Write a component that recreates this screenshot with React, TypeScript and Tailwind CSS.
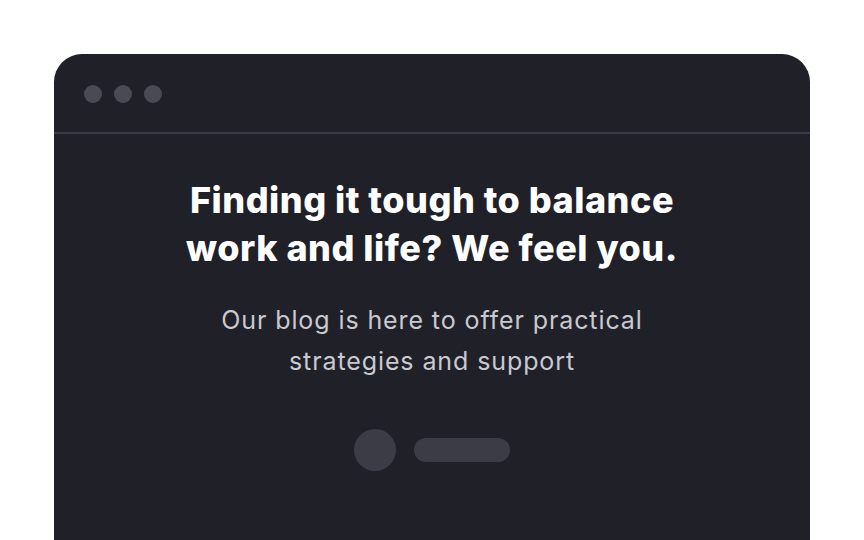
import React from "react";

export default function App() {
  return (
    <div className="w-[864px] h-[540px] bg-white overflow-hidden pt-[54px] px-[54px]" style={{ fontFamily: "Inter, 'Noto Sans', sans-serif" }}>
      <div className="w-[756px] h-[520px] bg-[#202029] rounded-t-[28px] flex flex-col">
        <div className="flex items-center gap-[12px] px-[30px] pt-px h-[80px] border-b-2 border-[#3a3a44]">
          <div className="w-[18px] h-[18px] rounded-full bg-[#4a4a54]" />
          <div className="w-[18px] h-[18px] rounded-full bg-[#4a4a54]" />
          <div className="w-[18px] h-[18px] rounded-full bg-[#4a4a54]" />
        </div>
        <div className="flex flex-col items-center pt-[42px]">
          <h1 className="text-white font-extrabold text-[36px] leading-[48px] text-center tracking-[0.5px]">
            Finding it tough to balance
            <br />
            work and life? We feel you.
          </h1>
          <p className="mt-[28px] text-[#c9c9ce] text-[25px] leading-[41px] text-center tracking-[0.9px]">
            Our blog is here to offer practical
            <br />
            strategies and support
          </p>
          <div className="mt-[47px] flex items-center gap-[18px]">
            <div className="w-[42px] h-[42px] rounded-full bg-[#3c3c46]" />
            <div className="w-[96px] h-[24px] rounded-full bg-[#3c3c46]" />
          </div>
        </div>
      </div>
    </div>
  );
}
